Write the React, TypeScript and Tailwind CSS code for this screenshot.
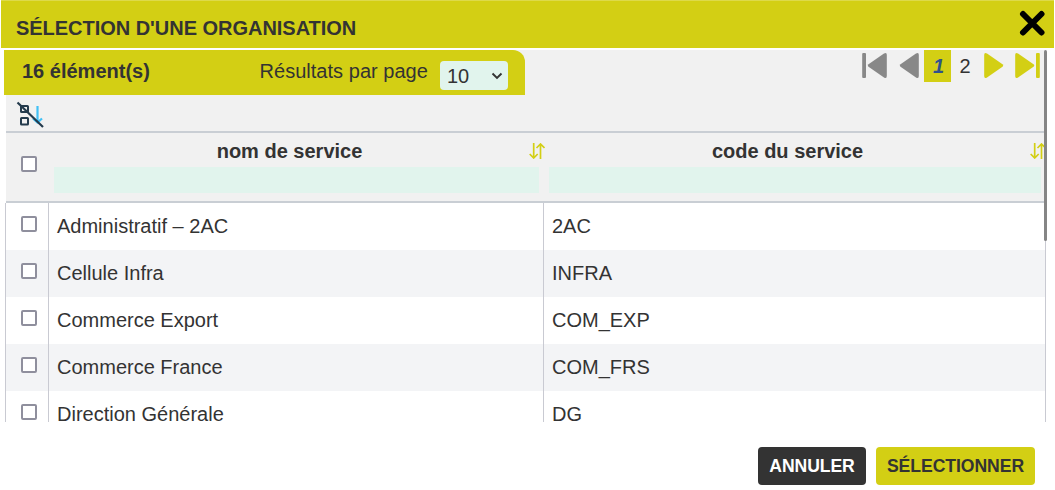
import React from 'react';

const rows = [
  { name: 'Administratif – 2AC', code: '2AC' },
  { name: 'Cellule Infra', code: 'INFRA' },
  { name: 'Commerce Export', code: 'COM_EXP' },
  { name: 'Commerce France', code: 'COM_FRS' },
  { name: 'Direction Générale', code: 'DG' },
];

function Checkbox({ label }: { label: string }) {
  return (
    <input
      type="checkbox"
      aria-label={label}
      className="block size-4 shrink-0 appearance-none rounded-[2px] border-2 border-[#8f8f9d] bg-white"
    />
  );
}

function SortIcon() {
  return (
    <svg className="block h-4 w-4 shrink-0" viewBox="0 0 16 16" fill="none" stroke="#d3cf14" strokeWidth="1.7">
      <path d="M4.7 0v15M0.7 11l4 4 4-4" />
      <path d="M11.5 16V1M7.5 5l4-4 4 4" />
    </svg>
  );
}

function ClearSortIcon() {
  return (
    <svg className="block h-7 w-7" viewBox="0 0 28 28" fill="none">
      <path d="M21.5 5v16M17 17.500l4.500 4 4.500-4" stroke="#41c0f5" strokeWidth="2.200" />
      <rect x="5" y="5" width="7" height="6" rx="0.600" stroke="#243b4d" strokeWidth="2" />
      <rect x="5" y="17" width="7" height="6.500" rx="0.600" stroke="#243b4d" strokeWidth="2" />
      <path d="M1.500 1.500L27 26" stroke="#243b4d" strokeWidth="2.200" />
    </svg>
  );
}

function Pagination() {
  return (
    <nav className="mr-[5px] flex h-8 items-start" aria-label="Pagination">
      <button aria-label="Première page">
        <svg className="block h-8 w-[35px]" viewBox="0 0 35 32" fill="#888">
          <rect x="0.200" y="3" width="3.800" height="25" rx="1" />
          <path d="M6.500 14.300L22 3.600Q24.800 2 24.800 5v21q0 3-2.800 1.400L6.500 16.700Q5 15.500 6.500 14.300Z" />
        </svg>
      </button>
      <button aria-label="Page précédente">
        <svg className="block h-8 w-[27px]" viewBox="0 0 27 32" fill="#888">
          <path d="M3.500 14.300L19 3.600Q21.800 2 21.800 5v21q0 3-2.800 1.400L3.500 16.700Q2 15.500 3.500 14.300Z" />
        </svg>
      </button>
      <button className="h-8 w-[27px] bg-[#d3cf14] pl-[2px] text-center font-bold italic leading-[31px] text-[#30518c]">1</button>
      <button className="h-8 w-[27px] pl-px text-center leading-[31px]">2</button>
      <button aria-label="Page suivante">
        <svg className="block h-8 w-[31px]" viewBox="0 0 31 32" fill="#d3cf14">
          <path d="M24.500 14.300L9 3.600Q6.200 2 6.200 5v21q0 3 2.800 1.400L24.500 16.700Q26 15.500 24.500 14.300Z" />
        </svg>
      </button>
      <button aria-label="Dernière page">
        <svg className="block h-8 w-[31px]" viewBox="0 0 31 32" fill="#d3cf14">
          <path d="M24.500 14.300L9 3.600Q6.200 2 6.200 5v21q0 3 2.800 1.400L24.500 16.700Q26 15.500 24.500 14.300Z" />
          <rect x="27" y="3" width="3.800" height="25" rx="1" />
        </svg>
      </button>
    </nav>
  );
}

export default function App() {
  return (
    <div className="flex h-[490px] w-[1055px] flex-col overflow-hidden bg-white font-['Liberation_Sans',Arial,sans-serif] text-[20px] leading-[24px] text-[#333]">
      <header className="mx-px flex h-12 shrink-0 items-center justify-between border-t border-[#ddda4a] bg-[#d3cf14] pl-[15px] pr-[9px]">
        <h1 className="pt-[7px] text-[20px] font-bold tracking-[-0.03px]">SÉLECTION D'UNE ORGANISATION</h1>
        <button aria-label="Fermer" className="mb-[3px]">
          <svg className="block h-[26px] w-[26px]" viewBox="0 0 26 26" stroke="#000" strokeWidth="6" strokeLinecap="round">
            <path d="M4 4l18.500 18.500M22.500 4L4 22.500" />
          </svg>
        </button>
      </header>

      <main className="relative mt-[2px] h-[372px] shrink-0 overflow-hidden">
        <div className="ml-1 mr-[10px] flex h-[45px] justify-between bg-[linear-gradient(to_right,#fff_2px,#f1f1f1_2px)]">
          <div className="flex h-[45px] w-[521px] rounded-tr-[12px] bg-[#d3cf14] pl-[18px]">
            <strong className="w-[237px] pt-[9px]">16 élément(s)</strong>
            <label className="w-[181px] pl-[0.500px] pt-[9px] tracking-[0.03px]">Résultats par page</label>
            <div className="mt-[11px] flex h-[29px] w-[68px] items-center justify-between rounded-[4px] bg-[#e1f4ed] pl-[7px] pr-[5px]">
              <span className="pt-px">10</span>
              <svg className="block h-3 w-3" viewBox="0 0 12 12" fill="none" stroke="#333" strokeWidth="1.9">
                <path d="M1.500 3.500l4.500 4.500 4.500-4.500" />
              </svg>
            </div>
          </div>
          <Pagination />
        </div>
        <div className="ml-[6px] mr-[10px] h-[38px] border-b-2 border-[#c9ced4] bg-[#f1f1f1] pl-[10px] pt-[6px]">
          <ClearSortIcon />
        </div>
        <div className="ml-[6px] mr-[10px] flex h-[70px] overflow-hidden border-b-2 border-[#c9ced4] bg-[#f1f1f1]">
          <div className="w-12 shrink-0 pl-[15px] pt-[23px]"><Checkbox label="Tout sélectionner" /></div>
          <div className="w-[495px] shrink-0">
            <div className="flex h-[34px] items-center">
              <span className="w-[471px] pt-[2px] text-center font-bold">nom de service</span>
              <span className="pl-[4px] pt-px"><SortIcon /></span>
            </div>
            <div className="h-[26px] w-[485px] bg-[#e1f4ed]" />
          </div>
          <div className="w-[500px] shrink-0">
            <div className="flex h-[34px] items-center">
              <span className="w-[477px] pt-[2px] text-center font-bold">code du service</span>
              <span className="pl-[4px] pt-px"><SortIcon /></span>
            </div>
            <div className="h-[26px] w-[492px] bg-[#e1f4ed]" />
          </div>
        </div>
        <div className="ml-[5px] h-[219px] w-[1041px] overflow-hidden border-x border-[#c9cad2]">
          {rows.map((row) => (
            <div key={row.name} className="flex h-[47px] bg-white even:bg-[#f3f4f6]">
              <div className="w-[43px] border-r border-[#c9cad2] pl-[14.5px] pt-[13px]"><Checkbox label={row.name} /></div>
              <div className="w-[495px] border-r border-[#c9cad2] pl-[8px] pt-[11px]">{row.name}</div>
              <div className="pl-[8px] pt-[11px]">{row.code}</div>
            </div>
          ))}
        </div>
        <div className="absolute left-[1044px] top-0 h-[191px] w-[3px] rounded-[2px] bg-[#858585]" />
      </main>

      <footer className="mt-[25px] flex justify-end gap-[10px] pr-5 text-[17.6px] font-bold">
        <button className="h-[38px] w-[108px] whitespace-nowrap rounded-[4px] bg-[#333] text-white tracking-[-0.1px]">ANNULER</button>
        <button className="h-[38px] w-[159px] whitespace-nowrap rounded-[4px] bg-[#d3cf14] tracking-[-0.05px]">SÉLECTIONNER</button>
      </footer>
    </div>
  );
}
